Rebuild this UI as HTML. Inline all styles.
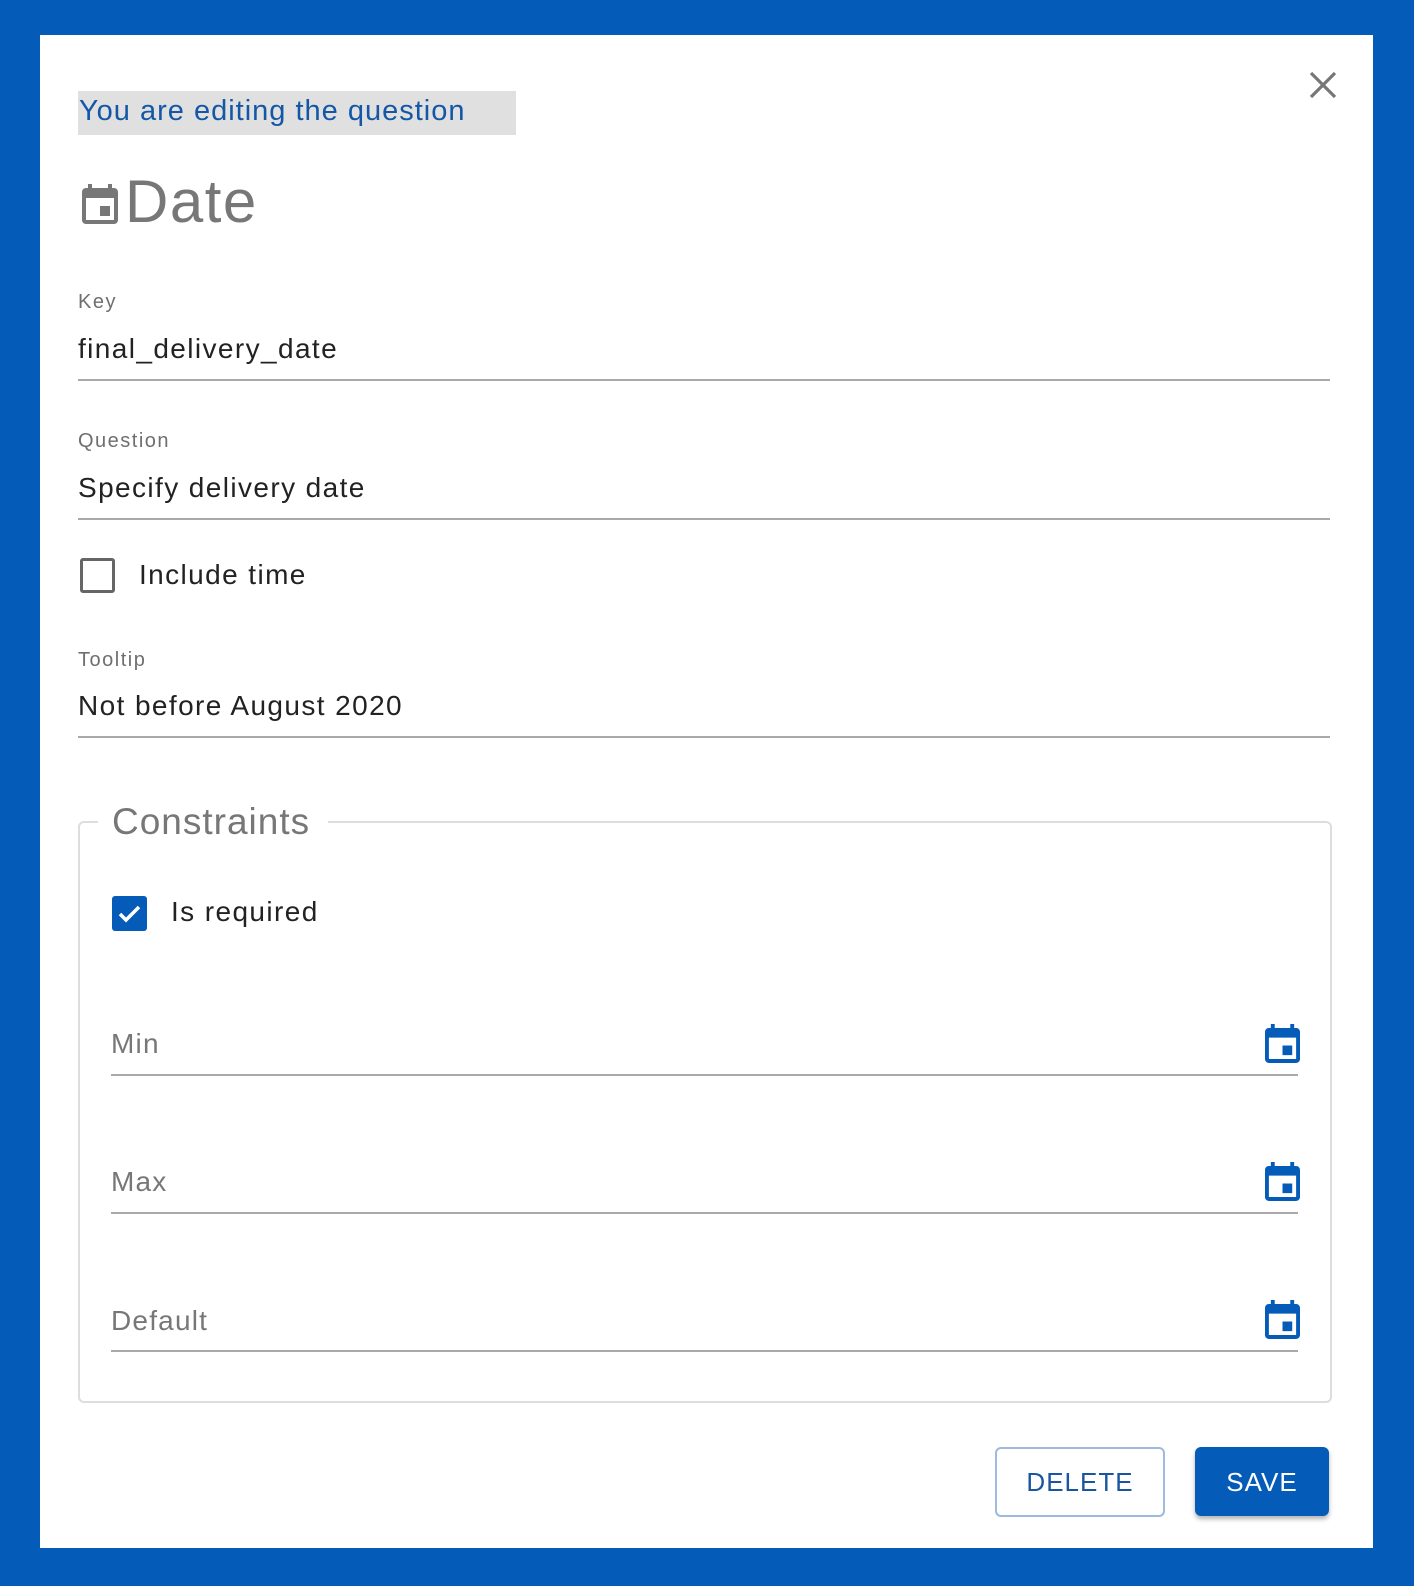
<!DOCTYPE html>
<html><head><meta charset="utf-8"><style>
body{margin:0;width:1414px;height:1586px;background:#055cb8;position:relative;overflow:hidden;font-family:"Liberation Sans",Arial,sans-serif}
.panel{position:absolute;left:40px;top:35px;width:1333px;height:1513px;background:#fff}
.a{position:absolute;white-space:nowrap;line-height:1}
.lbl{font-size:20px;color:#6f6f6f;left:78px;letter-spacing:1.5px}
.val{font-size:28px;color:#222;left:78px;letter-spacing:1.4px}
.line{position:absolute;height:2px;background:#a9a9a9}
.ph{font-size:28px;color:#777;left:111px;letter-spacing:1.2px}
.cal{position:absolute;width:35px;height:39px}
</style></head><body>
<div class="panel"></div>
<div style="position:absolute;left:78px;top:91px;width:438px;height:44px;background:#e0e0e0"></div>
<div class="a" style="left:79px;top:97px;font-size:29px;color:#1457a6;letter-spacing:1px">You are editing the question</div>
<svg style="position:absolute;left:82px;top:184px" width="36" height="40" viewBox="3 1 18 20"><path fill="#777" d="M17 12h-5v5h5v-5zM16 1v2H8V1H6v2H5c-1.11 0-1.99.9-1.99 2L3 19c0 1.1.89 2 2 2h14c1.1 0 2-.9 2-2V5c0-1.1-.9-2-2-2h-1V1h-2zm3 18H5V8h14v11z"/></svg>
<div class="a" style="left:125px;top:172px;font-size:60px;color:#777;letter-spacing:1.5px">Date</div>
<svg style="position:absolute;left:1308px;top:70px" width="30" height="30" viewBox="0 0 30 30"><path d="M3 3L27 27M27 3L3 27" stroke="#777" stroke-width="3.2"/></svg>

<div class="a lbl" style="top:292px">Key</div>
<div class="a val" style="top:335px">final_delivery_date</div>
<div class="line" style="left:78px;top:379px;width:1252px"></div>

<div class="a lbl" style="top:431px">Question</div>
<div class="a val" style="top:474px">Specify delivery date</div>
<div class="line" style="left:78px;top:518px;width:1252px"></div>

<div style="position:absolute;left:80px;top:558px;width:29px;height:29px;border:3px solid #666;border-radius:3px"></div>
<div class="a val" style="left:139px;top:561px">Include time</div>

<div class="a lbl" style="top:650px">Tooltip</div>
<div class="a val" style="top:692px">Not before August 2020</div>
<div class="line" style="left:78px;top:736px;width:1252px"></div>

<div style="position:absolute;left:78px;top:821px;width:1250px;height:578px;border:2px solid #ddd;border-radius:6px"></div>
<div style="position:absolute;left:98px;top:810px;width:230px;height:20px;background:#fff"></div>
<div class="a" style="left:112px;top:803px;font-size:37px;color:#777;letter-spacing:1px">Constraints</div>

<div style="position:absolute;left:112px;top:896px;width:35px;height:35px;background:#055cb8;border-radius:3px"></div>
<svg style="position:absolute;left:112px;top:896px" width="35" height="35" viewBox="0 0 35 35"><path d="M8 18l6 6 13-13" fill="none" stroke="#fff" stroke-width="3.5"/></svg>
<div class="a val" style="left:171px;top:898px">Is required</div>

<div class="a ph" style="top:1030px">Min</div>
<div class="line" style="left:111px;top:1074px;width:1187px"></div>
<svg class="cal" style="left:1265px;top:1024px" viewBox="3 1 18 20"><path fill="#055cb8" d="M17 12h-5v5h5v-5zM16 1v2H8V1H6v2H5c-1.11 0-1.99.9-1.99 2L3 19c0 1.1.89 2 2 2h14c1.1 0 2-.9 2-2V5c0-1.1-.9-2-2-2h-1V1h-2zm3 18H5V8h14v11z"/></svg>

<div class="a ph" style="top:1168px">Max</div>
<div class="line" style="left:111px;top:1212px;width:1187px"></div>
<svg class="cal" style="left:1265px;top:1162px" viewBox="3 1 18 20"><path fill="#055cb8" d="M17 12h-5v5h5v-5zM16 1v2H8V1H6v2H5c-1.11 0-1.99.9-1.99 2L3 19c0 1.1.89 2 2 2h14c1.1 0 2-.9 2-2V5c0-1.1-.9-2-2-2h-1V1h-2zm3 18H5V8h14v11z"/></svg>

<div class="a ph" style="top:1307px">Default</div>
<div class="line" style="left:111px;top:1350px;width:1187px"></div>
<svg class="cal" style="left:1265px;top:1300px" viewBox="3 1 18 20"><path fill="#055cb8" d="M17 12h-5v5h5v-5zM16 1v2H8V1H6v2H5c-1.11 0-1.99.9-1.99 2L3 19c0 1.1.89 2 2 2h14c1.1 0 2-.9 2-2V5c0-1.1-.9-2-2-2h-1V1h-2zm3 18H5V8h14v11z"/></svg>

<div style="position:absolute;left:995px;top:1447px;width:166px;height:66px;border:2px solid #9db9dc;border-radius:6px;box-sizing:content-box"></div>
<div class="a" style="left:995px;width:170px;text-align:center;top:1469px;font-size:26px;color:#1a55a0;letter-spacing:1px">DELETE</div>
<div style="position:absolute;left:1195px;top:1447px;width:134px;height:69px;background:#055cb8;border-radius:6px;box-shadow:0 3px 5px rgba(0,0,0,.3)"></div>
<div class="a" style="left:1195px;width:134px;text-align:center;top:1469px;font-size:26px;color:#fff;letter-spacing:1px">SAVE</div>
</body></html>
